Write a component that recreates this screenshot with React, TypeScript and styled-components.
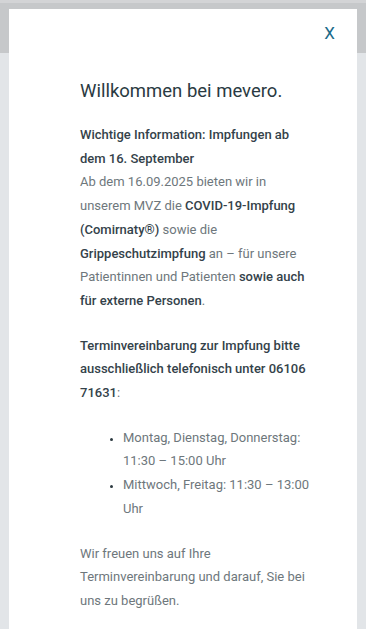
import React from 'react'
import styled, { createGlobalStyle } from 'styled-components'

const GlobalStyle = createGlobalStyle`
  html, body {
    margin: 0;
    padding: 0;
    height: 100%;
    overflow: hidden;
  }
  body {
    font-family: Roboto, "Liberation Sans", sans-serif;
    background: #e2e5e8;
  }
`

const Page = styled.div`
  position: relative;
  width: 366px;
  height: 629px;
  overflow: hidden;
  background: #e2e5e8;
`

const HeaderBand = styled.div`
  height: 53px;
  background: #c6c8ca;
  border-top: 3px solid #d3d4d6;
  box-sizing: border-box;
`

const Modal = styled.div`
  position: absolute;
  top: 9px;
  left: 9px;
  width: 348px;
  bottom: -40px;
  background: #ffffff;
  display: flex;
  flex-direction: column;
`

const TopBar = styled.div`
  display: flex;
  justify-content: flex-end;
  padding: 14px 22px 0 0;
`

const CloseButton = styled.button`
  border: none;
  background: none;
  padding: 0;
  font-family: Roboto, "Liberation Sans", sans-serif;
  font-size: 17px;
  color: #1b6a8a;
  cursor: pointer;
  line-height: 20px;
`

const Content = styled.div`
  padding: 35px 44px 0 71px;
`

const Title = styled.h2`
  margin: 0 0 19px;
  font-weight: 400;
  font-size: 18.5px;
  line-height: 26px;
  color: #2a3a42;
`

const Paragraph = styled.p`
  margin: 0 0 21px;
  font-size: 13px;
  line-height: 23.7px;
  color: #6e777c;
`

const Strong = styled.span`
  color: #34424a;
  font-weight: 500;
`

const List = styled.ul`
  margin: 0 0 21px;
  padding: 0 0 0 43px;
  font-size: 13px;
  line-height: 23.7px;
  color: #6e777c;
  list-style: disc;
`

const Item = styled.li`
  &::marker {
    font-size: 11px;
    color: #2c3a40;
  }
`

export default function App() {
  return (
    <Page>
      <GlobalStyle />
      <HeaderBand />
      <Modal>
        <TopBar>
          <CloseButton aria-label="Schließen">X</CloseButton>
        </TopBar>
        <Content>
          <Title>Willkommen bei mevero.</Title>
          <Paragraph>
            <Strong>Wichtige Information: Impfungen ab dem 16. September</Strong>
            <br />
            Ab dem 16.09.2025 bieten wir in unserem MVZ die <Strong>COVID-19-Impfung (Comirnaty®)</Strong> sowie die{' '}
            <Strong>Grippeschutzimpfung</Strong> an – für unsere Patientinnen und Patienten{' '}
            <Strong>sowie auch für externe Personen</Strong>.
          </Paragraph>
          <Paragraph>
            <Strong>Terminvereinbarung zur Impfung bitte ausschließlich telefonisch unter 06106 71631</Strong>:
          </Paragraph>
          <List>
            <Item>Montag, Dienstag, Donnerstag: 11:30 – 15:00 Uhr</Item>
            <Item>Mittwoch, Freitag: 11:30 – 13:00 Uhr</Item>
          </List>
          <Paragraph>
            Wir freuen uns auf Ihre Terminvereinbarung und darauf, Sie bei uns zu begrüßen.
          </Paragraph>
        </Content>
      </Modal>
    </Page>
  )
}
